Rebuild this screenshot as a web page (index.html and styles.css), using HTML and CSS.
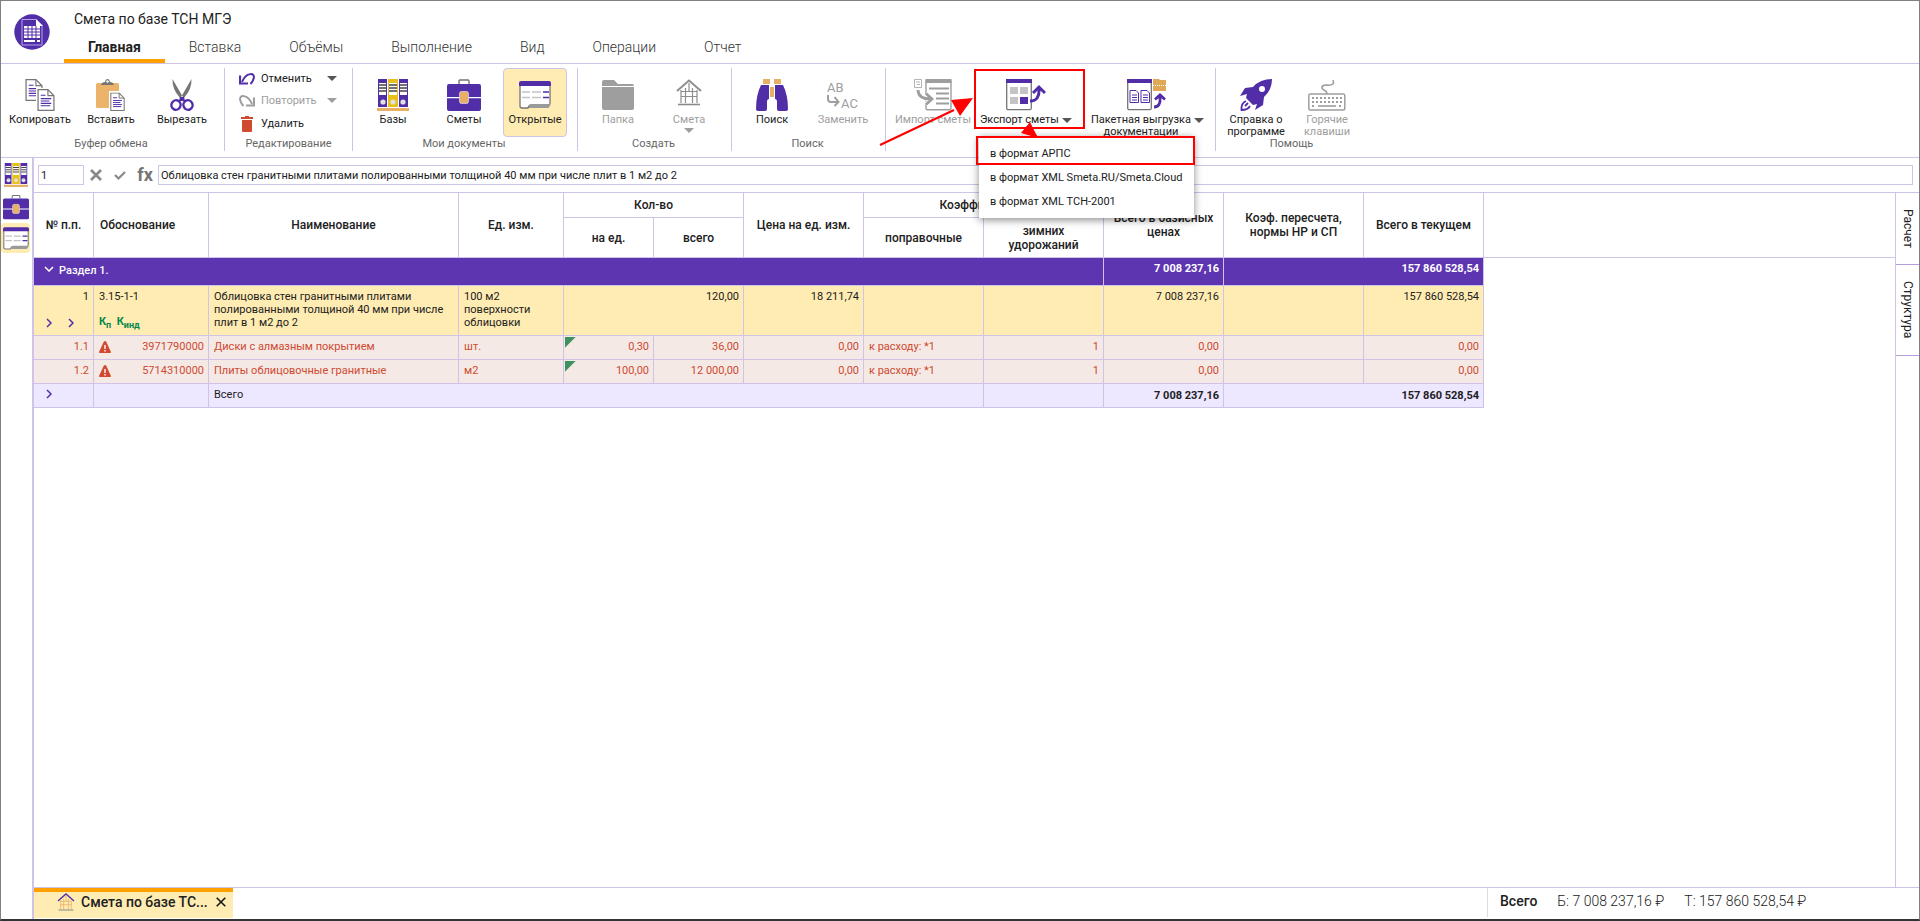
FILE: index.html
```html
<!DOCTYPE html>
<html lang="ru">
<head>
<meta charset="utf-8">
<title>Смета по базе ТСН МГЭ</title>
<link rel="stylesheet" href="styles.css">
</head>
<body>
<svg class="sprite" aria-hidden="true">
  <symbol id="i-books" viewBox="0 0 32 32">
    <path fill="#512da8" d="M1 0h9v28H1zM22 0h9v28h-9z"/><path fill="#e8c01c" d="M11 0h10v28H11z"/>
    <path fill="#fff" d="M2 4h7v12H2zM12 4h8v12h-8zM23 4h7v12h-7z"/>
    <path stroke="#444" stroke-width="1.6" d="M2 6h7M2 9h7M2 12h7M12 6h8M12 9h8M12 12h8M23 6h7M23 9h7M23 12h7"/>
    <circle cx="6" cy="23" r="2.6" fill="#e0e0e0"/><circle cx="16" cy="23" r="2.6" fill="#e0e0e0"/><circle cx="26" cy="23" r="2.6" fill="#e0e0e0"/>
    <path fill="#e8b064" d="M0 29h32v3H0z"/>
  </symbol>
  <symbol id="i-bag" viewBox="0 0 34 32">
    <path d="M12 5V2.2Q12 1 13 1h8q1 0 1 1.200V5" fill="none" stroke="#757575" stroke-width="1.400"/>
    <path fill="#512da8" d="M2 5h30q2 0 2 2v11H0V7q0-2 2-2zM0 19.200h34V30q0 2-2 2H2q-2 0-2-2z"/>
    <rect x="12.500" y="12.500" width="9" height="12" rx="2" fill="#e8b064" stroke="#d8cdf0" stroke-width=".8"/>
  </symbol>
  <symbol id="i-open" viewBox="0 0 32 28">
    <path d="M1 4V25q0 2 2 2h6q1-3 3-3h18q1 0 1-2V4z" fill="#fff" stroke="#757575" stroke-width="1.300"/>
    <path d="M10 27h19q2-.5 2-4H12q-2 .5-2 4z" fill="#9a9a9a"/>
    <path fill="#512da8" d="M2 0h28q2 0 2 2v3H0V2q0-2 2-2z"/>
    <path stroke="#c4c4c4" stroke-width="1.500" d="M3 11h8M13 11h9M3 16.500h8M13 16.500h9"/><path stroke="#512da8" stroke-width="1.500" d="M24 11h6M24 16.500h6"/>
  </symbol>
  <symbol id="i-page" viewBox="0 0 18 23">
    <path d="M.7.700H11l6.300 6.300v15.300H.7z" fill="#fff" stroke="#757575" stroke-width="1.300"/><path d="M11 .7v6.300h6.300" fill="none" stroke="#757575" stroke-width="1.200"/>
    <path d="M3.500 6.500h5M3.500 10h11M3.500 12.500h9M3.500 15h11M3.500 17.500h10" stroke="#512da8" stroke-width="1.200"/>
  </symbol>
  <symbol id="i-copy" viewBox="0 0 30 32"><use href="#i-page" x="0" y="0" width="18" height="22"/><path fill="#fff" d="M11 9h12l7 7v16H11z"/><use href="#i-page" x="12" y="10" width="18" height="22"/></symbol>
  <symbol id="i-paste" viewBox="0 0 30 32">
    <rect y="4" width="23" height="25" rx="1.500" fill="#ebb46a"/><path d="M5 6q1-3 4-3 .5-3 2.500-3T14 3q3 0 4 3z" fill="#757575"/><circle cx="11.500" cy="2.500" r="1.200" fill="#fff"/>
    <path fill="#fff" d="M13 12h10l7 6v14H13z"/><use href="#i-page" x="14" y="13.500" width="15" height="18.500"/>
  </symbol>
  <symbol id="i-cut" viewBox="0 0 24 32">
    <path d="M2.500 0l11 19h-3.500Q2 10 2.500 0zM21.500 0l-11 19H14Q22 10 21.500 0z" fill="#757575"/>
    <path d="M10 18h4l1 4h-6z" fill="#512da8"/><ellipse cx="6" cy="26" rx="4.500" ry="4.800" fill="none" stroke="#512da8" stroke-width="2.400" transform="rotate(25 6 26)"/><ellipse cx="18" cy="26" rx="4.500" ry="4.800" fill="none" stroke="#512da8" stroke-width="2.400" transform="rotate(-25 18 26)"/>
  </symbol>
  <symbol id="i-undo" viewBox="0 0 16 12"><path d="M3 9C7-1 17-1 14.500 6 14 8 13 9.500 11.500 11" fill="none" stroke="currentColor" stroke-width="2"/><path d="M1 2.500V10.500H9" fill="none" stroke="currentColor" stroke-width="2.200"/></symbol>
  <symbol id="i-trash" viewBox="0 0 12 16"><path fill="#cf4a2f" d="M4 0h4v1h4v2H0V1h4zM1 4h10v11q0 1-1 1H2q-1 0-1-1z"/></symbol>
  <symbol id="i-folder" viewBox="0 0 32 32"><path fill="#9e9e9e" d="M2 1h10l4 4h14q2 0 2 2H0V3q0-2 2-2zM0 8h32v21q0 2-2 2H2q-2 0-2-2z"/></symbol>
  <symbol id="i-house" viewBox="0 0 26 27">
    <path d="M1 12L13 1.500 25 12" fill="none" stroke="var(--roof)" stroke-width="2"/>
    <path d="M5 11v13M9.500 9v15M16.500 9v15M21 11v13M5 12.500h16M5 17.500h16M13 4v8" fill="none" stroke="var(--wall)" stroke-width="1.200"/><path d="M2 25.500h22" stroke="#8a8a8a" stroke-width="1.600"/>
  </symbol>
  <symbol id="i-find" viewBox="0 0 32 32">
    <path fill="#e8b064" d="M7 0h7v5H7zM18 0h7v5h-7zM14 8h4v10h-4z"/>
    <path fill="#512da8" d="M5 6h8v14q-2 0-2 3v7q0 2-2 2H2q-2 0-2-2Q0 16 5 6zM27 6h-8v14q2 0 2 3v7q0 2 2 2h7q2 0 2-2 0-14-5-24z"/>
  </symbol>
  <symbol id="i-import" viewBox="0 0 38 32">
    <rect x="12" y=".7" width="25" height="30" rx="1.500" fill="#fff" stroke="#9e9e9e" stroke-width="1.400"/><path fill="#9e9e9e" d="M11.500 0h26v4h-26z"/>
    <path d="M15 9.500h20M22 14.500h13M22 19.500h13M22 24.500h13" stroke="#9e9e9e" stroke-width="1.800"/>
    <path d="M.5.500h7v8h-7zM2 3h4M3 5.500h3" fill="none" stroke="#b5b5b5"/>
    <path d="M4 11q0 9 13 9M12 14.500l6 5.500-6 5.500" fill="none" stroke="#fff" stroke-width="4.500"/><path d="M4 11q0 9 13 9M12 14.500l6 5.500-6 5.500" fill="none" stroke="#9e9e9e" stroke-width="2.800"/>
  </symbol>
  <symbol id="i-export" viewBox="0 0 40 32">
    <rect x=".7" y=".7" width="24.600" height="30" rx="1.500" fill="#fff" stroke="#757575" stroke-width="1.300"/><path fill="#512da8" d="M0 0h26v4H0z"/>
    <path fill="#c4c4c4" d="M4 8h8v7H4zM14 8h8v7h-8zM4 18h8v7H4z"/><path fill="#512da8" d="M14 18h8v7h-8z"/>
    <path d="M24 22q10 0 9-13M27 14l6-6 6 6" fill="none" stroke="#512da8" stroke-width="3"/>
  </symbol>
  <symbol id="i-batch" viewBox="0 0 40 32">
    <rect x=".7" y=".7" width="23.600" height="30" rx="1.500" fill="#fff" stroke="#757575" stroke-width="1.300"/><path fill="#512da8" d="M0 0h25v4H0z"/>
    <path d="M3 11.500h6l2.500 2.500v9.500H3zM14 11.500h6l2.500 2.500v9.500H14z" fill="#fff" stroke="#512da8" stroke-width="1"/><path d="M5 16h5M5 18.500h5M5 21h5M16 16h5M16 18.500h5M16 21h5" stroke="#512da8"/>
    <path fill="#e0a955" d="M26 0h6l1 1h6v11H26z"/><path d="M26 6.500h13" stroke="#fff" stroke-dasharray="1 1"/>
    <path d="M27 28q7 0 6-10M28 20.500l5-4.500 5 4.500" fill="none" stroke="#512da8" stroke-width="2.800"/>
  </symbol>
  <symbol id="i-rocket" viewBox="0 0 32 32">
    <path fill="#512da8" fill-rule="evenodd" d="M32 0Q20 0 13 8L5 9 0 17l7-2-1 4 7 7 4-1-2 6 8-5 1-8Q32 11 32 0zM22 7a3 3 0 1 1 0 6 3 3 0 0 1 0-6z"/><path d="M6 22q-5 2-4.500 9Q8 31 10 27M5 27l3-3" fill="none" stroke="#512da8" stroke-width="1.800"/>
  </symbol>
  <symbol id="i-keys" viewBox="0 0 38 32">
    <path d="M19 15c0-5-6-3-5-7s8 0 11-3q1-1 0-4" fill="none" stroke="#9e9e9e" stroke-width="1.600"/><rect x=".8" y="15" width="36" height="16" rx="1.500" fill="#fff" stroke="#9e9e9e" stroke-width="1.500"/>
    <path d="M4 19h30M4 23h30M4 27h3M31 27h3" stroke="#9e9e9e" stroke-width="1.800" stroke-dasharray="2 2"/><path d="M10 27h18" stroke="#9e9e9e" stroke-width="1.600"/>
  </symbol>
  <symbol id="i-warn" viewBox="0 0 12 12"><path d="M6 0q.8 0 1.200.800L12 11q0 1-1 1H1q-1 0-1-1L4.800.800Q5.200 0 6 0z" fill="#cf4a2f"/><path d="M6 4v4M6 9v1.500" stroke="#fff" stroke-width="1.400"/></symbol>
  <symbol id="i-chev" viewBox="0 0 6 10"><path d="M1 1l4 4-4 4" fill="none" stroke="currentColor" stroke-width="1.500"/></symbol>
</svg>

<div class="app">
  <header class="header">
    <svg class="logo" viewBox="0 0 36 36"><circle cx="18" cy="18" r="17.700" fill="#512da8"/><path d="M8 5.500h14l6 6V31H8z" fill="none" stroke="#b9a5e6"/><path d="M22 5l7 7h-7z" fill="#fff"/><path fill="#fff" d="M10 12h16v12H10zM10 26h11v2H10zM23 26h3v2h-3z"/><path d="M10 15h16M10 18h16M10 21h16M14 12v12M18 12v12M22 12v12" stroke="#512da8"/></svg>
    <div class="heading">
      <h1 class="title">Смета по базе ТСН МГЭ</h1>
      <nav class="tabs">
        <button class="tab tab-active">Главная</button><button class="tab">Вставка</button><button class="tab">Объёмы</button><button class="tab">Выполнение</button><button class="tab">Вид</button><button class="tab">Операции</button><button class="tab">Отчет</button>
      </nav>
    </div>
  </header>

  <div class="ribbon">
    <section class="group group-first">
      <div class="tools">
        <button class="tool"><svg class="w30"><use href="#i-copy"/></svg><span>Копировать</span></button>
        <button class="tool"><svg class="w30"><use href="#i-paste"/></svg><span>Вставить</span></button>
        <button class="tool"><svg class="w24"><use href="#i-cut"/></svg><span>Вырезать</span></button>
      </div>
      <div class="caption">Буфер обмена</div>
    </section>
    <section class="group group-edit">
      <div class="edits">
        <button class="edit"><svg class="undo"><use href="#i-undo"/></svg><span class="edit-label">Отменить</span><i class="caret"></i></button>
        <button class="edit" disabled><svg class="undo flip"><use href="#i-undo"/></svg><span class="edit-label">Повторить</span><i class="caret"></i></button>
        <button class="edit"><svg class="trash"><use href="#i-trash"/></svg><span class="edit-label">Удалить</span></button>
      </div>
      <div class="caption">Редактирование</div>
    </section>
    <section class="group">
      <div class="tools">
        <button class="tool"><svg class="w32"><use href="#i-books"/></svg><span>Базы</span></button>
        <button class="tool"><svg class="w34"><use href="#i-bag"/></svg><span>Сметы</span></button>
        <button class="tool tool-active"><svg class="w32"><use href="#i-open"/></svg><span>Открытые</span></button>
      </div>
      <div class="caption">Мои документы</div>
    </section>
    <section class="group">
      <div class="tools">
        <button class="tool" disabled><svg class="w32"><use href="#i-folder"/></svg><span>Папка</span></button>
        <button class="tool" disabled><svg class="w26 house-gray"><use href="#i-house" height="27"/></svg><span>Смета</span><i class="caret"></i></button>
      </div>
      <div class="caption">Создать</div>
    </section>
    <section class="group">
      <div class="tools">
        <button class="tool"><svg class="w32"><use href="#i-find"/></svg><span>Поиск</span></button>
        <button class="tool" disabled><svg class="w34" viewBox="0 0 34 32"><text x="1" y="13" class="swap-text">AB</text><text x="15" y="29" class="swap-text">AC</text><path d="M2 16v4q0 3 3 3h7M8.500 18l4 5-4 4" fill="none" stroke="#9e9e9e" stroke-width="2"/></svg><span>Заменить</span></button>
      </div>
      <div class="caption">Поиск</div>
    </section>
    <section class="group">
      <div class="tools">
        <button class="tool tool-wide" disabled><svg class="w38"><use href="#i-import"/></svg><span>Импорт сметы</span></button>
        <div class="export">
          <button class="tool tool-wide" aria-expanded="true"><svg class="w40"><use href="#i-export"/></svg><span class="with-caret">Экспорт сметы<i class="caret"></i></span></button>
          <ul class="menu">
            <li><button class="menu-item">в формат АРПС</button></li>
            <li><button class="menu-item">в формат XML Smeta.RU/Smeta.Cloud</button></li>
            <li><button class="menu-item">в формат XML ТСН-2001</button></li>
          </ul>
          <div class="mark mark-button"></div>
          <div class="mark mark-item"></div>
          <svg class="arrows" viewBox="0 0 170 70"><path d="M1 62L75 27" stroke="red" stroke-width="2"/><path fill="red" d="M94 15L72 17l9 16zM151 39l8 16-17-5zM151 44l9 11-18-5z"/></svg>
        </div>
        <button class="tool tool-wide tool-batch"><svg class="w40"><use href="#i-batch"/></svg><span class="with-caret">Пакетная выгрузка<i class="caret"></i></span><span class="second">документации</span></button>
      </div>
    </section>
    <section class="group group-last">
      <div class="tools">
        <button class="tool"><svg class="w32"><use href="#i-rocket"/></svg><span>Справка о программе</span></button>
        <button class="tool" disabled><svg class="w38"><use href="#i-keys"/></svg><span>Горячие клавиши</span></button>
      </div>
      <div class="caption">Помощь</div>
    </section>
  </div>

  <div class="body">
    <aside class="rail">
      <button class="rail-item" aria-label="Базы"><svg class="w24"><use href="#i-books"/></svg></button>
      <button class="rail-item" aria-label="Сметы"><svg class="w26"><use href="#i-bag"/></svg></button>
      <button class="rail-item rail-active" aria-label="Открытые"><svg class="w26"><use href="#i-open"/></svg></button>
    </aside>
    <main class="main">
      <div class="formula">
        <input class="cell-no" value="1" aria-label="Номер">
        <button class="mini" aria-label="Отмена"><svg viewBox="0 0 12 12"><path d="M1 1l10 10M11 1L1 11" stroke="#8a8a8a" stroke-width="2.800"/></svg></button>
        <button class="mini" aria-label="Принять"><svg viewBox="0 0 12 12"><path d="M1 6l3.500 3.500L11 3" fill="none" stroke="#8a8a8a" stroke-width="2.200"/></svg></button>
        <button class="mini fx">fx</button>
        <input class="cell-text" value="Облицовка стен гранитными плитами полированными толщиной 40 мм при числе плит в 1 м2 до 2" aria-label="Содержимое ячейки">
      </div>
      <div class="work">
        <div class="sheet">
          <div class="sheet-head-line"></div>
          <table class="grid">
            <colgroup><col class="c60"><col class="c115"><col class="c250"><col class="c105"><col class="c90"><col class="c90"><col class="c120"><col class="c120"><col class="c120"><col class="c120"><col class="c140"><col class="c120"></colgroup>
            <thead>
              <tr class="h1"><th rowspan="2">№ п.п.</th><th rowspan="2" class="left">Обоснование</th><th rowspan="2">Наименование</th><th rowspan="2">Ед. изм.</th><th colspan="2">Кол-во</th><th rowspan="2">Цена на ед. изм.</th><th colspan="2">Коэффициенты</th><th rowspan="2">Всего в базисных ценах</th><th rowspan="2">Коэф. пересчета, нормы НР и СП</th><th rowspan="2">Всего в текущем</th></tr>
              <tr class="h2"><th>на ед.</th><th>всего</th><th>поправочные</th><th>зимних удорожаний</th></tr>
            </thead>
            <tbody>
              <tr class="section"><td colspan="9"><button class="chev down" aria-label="Свернуть"><svg><use href="#i-chev"/></svg></button>Раздел 1.</td><td class="num">7 008 237,16</td><td class="num" colspan="2">157 860 528,54</td></tr>
              <tr class="item"><td class="num">1<div class="chevs"><button class="chev" aria-label="Развернуть"><svg><use href="#i-chev"/></svg></button><button class="chev" aria-label="Ресурсы"><svg><use href="#i-chev"/></svg></button></div></td><td>3.15-1-1<div class="koef">К<sub>п</sub>&nbsp; К<sub>инд</sub></div></td><td>Облицовка стен гранитными плитами полированными толщиной 40 мм при числе плит в 1 м2 до 2</td><td>100 м2 поверхности облицовки</td><td class="num" colspan="2">120,00</td><td class="num">18 211,74</td><td></td><td></td><td class="num">7 008 237,16</td><td></td><td class="num">157 860 528,54</td></tr>
              <tr class="res"><td class="num">1.1</td><td><div class="code"><svg><use href="#i-warn"/></svg>3971790000</div></td><td>Диски с алмазным покрытием</td><td>шт.</td><td class="num flag">0,30</td><td class="num">36,00</td><td class="num">0,00</td><td>к расходу: *1</td><td class="num">1</td><td class="num">0,00</td><td></td><td class="num">0,00</td></tr>
              <tr class="res"><td class="num">1.2</td><td><div class="code"><svg><use href="#i-warn"/></svg>5714310000</div></td><td>Плиты облицовочные гранитные</td><td>м2</td><td class="num flag">100,00</td><td class="num">12 000,00</td><td class="num">0,00</td><td>к расходу: *1</td><td class="num">1</td><td class="num">0,00</td><td></td><td class="num">0,00</td></tr>
              <tr class="total"><td><button class="chev" aria-label="Развернуть"><svg><use href="#i-chev"/></svg></button></td><td></td><td colspan="6">Всего</td><td></td><td class="num">7 008 237,16</td><td class="num" colspan="2">157 860 528,54</td></tr>
            </tbody>
          </table>
        </div>
        <div class="side-tabs"><button class="side-tab side-a">Расчет</button><button class="side-tab side-b">Структура</button></div>
      </div>
      <footer class="footer">
        <div class="doc"><svg class="doc-icon"><use href="#i-house"/></svg><span class="doc-name">Смета по базе ТС...</span><button class="close" aria-label="Закрыть"><svg viewBox="0 0 10 10"><path d="M.7.700l8.600 8.600M9.300.700L.7 9.300" stroke="#111" stroke-width="1.500"/></svg></button></div>
        <div class="sums"><strong>Всего</strong><span>Б: 7 008 237,16 ₽</span><span>Т: 157 860 528,54 ₽</span></div>
      </footer>
    </main>
  </div>
</div>
</body>
</html>
```
FILE: styles.css
```css
* { box-sizing: border-box; }
body { margin: 0; font-family: Roboto, "Liberation Sans", sans-serif; font-size: 11px; color: #212121; background: #fff; }
button, input { font: inherit; color: inherit; background: none; border: 0; padding: 0; margin: 0; }
.sprite { position: absolute; width: 0; height: 0; }
.app { --line: #cfc4e8; --violet: #512da8; min-height: 100vh; display: flex; flex-direction: column; border: 1px solid #808080; border-bottom: 2px solid #333; }

.header { display: flex; gap: 14px; padding: 0 0 0 13px; border-bottom: 1px solid var(--line); }
.logo { width: 36px; height: 36px; margin-top: 13px; flex: none; }
.heading { display: flex; flex-direction: column; }
.title { margin: 8px 0 0 10px; font-size: 14px; line-height: 20px; font-weight: 400; }
.tabs { display: flex; margin-top: 5px; }
.tab { height: 29px; padding: 0 24px; font-size: 14px; line-height: 20px; border-bottom: 4px solid transparent; color: #333; font-weight: 300; }
.tab-active { font-weight: 700; color: #212121; border-color: #ffa000; }

.ribbon { display: flex; height: 94px; padding: 4px 0 6px; border-bottom: 1px solid var(--line); }
.group { display: flex; flex-direction: column; padding: 0 10px 0 8px; border-right: 1px solid var(--line); }
.group-first { padding-left: 7px; }
.group-last { border-right: 0; }
.tools { display: flex; gap: 7px; height: 71px; }
.caption { line-height: 14px; text-align: center; color: #666; }
.tool { width: 64px; height: 69px; padding-top: 10px; display: flex; flex-direction: column; align-items: center; line-height: 12px; border: 1px solid transparent; border-radius: 4px; white-space: nowrap; }
.tool > svg { height: 32px; margin-bottom: 3px; flex: none; }
.group-last .tool { white-space: normal; }
.tool-active { background: #ffecb3; border-color: var(--line); }
.tool-wide { width: auto; }
.tool-batch { margin-left: 10px; }
.tool:disabled, .edit:disabled { color: #9e9e9e; }
.w24 { width: 24px; } .w26 { width: 26px; } .w30 { width: 30px; } .w32 { width: 32px; } .w34 { width: 34px; } .w38 { width: 38px; } .w40 { width: 40px; }
.caret { display: block; border: 5px solid transparent; border-top-color: #555; border-bottom: 0; }
.tool:disabled .caret, .edit:disabled .caret { border-top-color: #9e9e9e; }
.tool > .caret { margin-top: 2px; }
.with-caret { display: flex; align-items: center; gap: 3px; }
.second { padding-right: 13px; }
.house-gray { --roof: #8e8e8e; --wall: #8e8e8e; }
.swap-text { font: 400 13px Roboto, sans-serif; fill: #9e9e9e; }

.group-edit { width: 128px; padding: 0 10px; }
.edits { height: 71px; display: flex; flex-direction: column; padding: 0 0 0 4px; }
.edit { height: 23px; display: flex; align-items: center; }
.edit:first-child { height: 21px; }
.undo { width: 16px; height: 12px; color: var(--violet); }
.edit:disabled .undo { color: #9e9e9e; }
.flip { transform: scaleX(-1); }
.trash { width: 12px; height: 16px; margin: 0 2px; }
.edit-label { flex: 1; margin-left: 6px; text-align: left; }
.edit .caret { margin-right: 5px; }

.export { position: relative; }
.menu { position: absolute; z-index: 2; left: 0; top: 68px; width: 215px; margin: 0; padding: 5px 0; list-style: none; background: #fff; box-shadow: 0 2px 8px rgba(0, 0, 0, .45); }
.menu-item { display: block; width: 100%; height: 24px; padding-left: 11px; text-align: left; white-space: nowrap; }
.mark { position: absolute; z-index: 3; border: 2px solid red; }
.mark-button { left: -5px; top: 1px; width: 111px; height: 60px; }
.mark-item { left: -3px; top: 68px; width: 219px; height: 29px; }
.arrows { position: absolute; z-index: 4; left: -100px; top: 15px; width: 170px; height: 70px; pointer-events: none; }

.body { flex: 1; display: flex; }
.rail { width: 33px; border-right: 2px solid var(--line); padding-top: 1px; flex: none; }
.rail-item { display: flex; width: 29px; height: 32px; align-items: center; justify-content: center; }
.rail-item svg { height: 26px; }
.rail-active { height: 30px; background: #ffecb3; border-radius: 4px; }
.rail-active svg { height: 23px; }
.main { flex: 1; min-width: 0; display: flex; flex-direction: column; }
.formula { display: flex; align-items: center; padding: 7px 6px 7px 0; border-bottom: 1px solid var(--line); }
.formula input { height: 20px; border: 1px solid var(--line); padding: 0 2px; }
.cell-no { width: 46px; margin: 0 6px 0 4px; }
.cell-text { flex: 1; }
.mini { width: 12px; height: 12px; margin-right: 12px; }
.mini svg { display: block; width: 12px; height: 12px; }
.fx { width: 20px; height: 20px; margin: 0 3px 0 -3px; font-size: 18px; line-height: 20px; font-weight: 700; color: #757575; }

.work { flex: 1; display: flex; }
.sheet { flex: 1; min-width: 0; position: relative; }
.sheet-head-line { position: absolute; left: 0; right: 0; top: 64px; height: 1px; background: var(--line); }
.grid { position: relative; table-layout: fixed; width: 1450px; border-spacing: 0; line-height: 13px; background: #fff; }
.c60 { width: 60px; } .c90 { width: 90px; } .c105 { width: 105px; } .c115 { width: 115px; } .c120 { width: 120px; } .c140 { width: 140px; } .c250 { width: 250px; }
.grid th, .grid td { border: 0 solid var(--line); border-width: 0 1px 1px 0; }
.grid th { padding: 0 6px; font-size: 12px; font-weight: 500; line-height: 14px; text-align: center; }
.grid th.left { text-align: left; }
.h1 { height: 25px; } .h2 { height: 40px; }
.grid td { padding: 4px 4px 0 5px; vertical-align: top; }
.grid td.num { text-align: right; }
.section { height: 28px; background: #5e35b1; color: #fff; font-weight: 500; }
.section .num, .total .num { font-weight: 700; }
.item { height: 50px; background: #ffecb3; }
.res { height: 24px; background: #f5e9e6; color: #cf4a2f; }
.total { height: 24px; background: #ede7ff; }
.chev { width: 12px; height: 10px; color: var(--violet); }
.chev svg { display: block; width: 6px; height: 10px; margin: auto; }
.grid .section td:first-child { padding: 6px 0 0 9px; }
.grid .total .num { padding-top: 5px; }
.down { color: #fff; margin-right: 4px; }
.down svg { transform: rotate(90deg); }
.chevs { display: flex; gap: 10px; margin-top: 15px; padding-left: 4px; }
.grid .total td:first-child { padding: 5px 0 0 9px; }
.koef { margin-top: 11px; font-weight: 700; color: #00874a; line-height: 16px; }
.koef sub { font-size: 9px; line-height: 9px; }
.code { display: flex; justify-content: space-between; align-items: center; }
.code svg { width: 12px; height: 12px; }
.flag { background: linear-gradient(135deg, #3e9160 7px, transparent 8px) 1px 1px no-repeat; }

.side-tabs { width: 24px; border-left: 1px solid var(--line); display: flex; flex-direction: column; }
.side-tab { width: 23px; writing-mode: vertical-rl; text-align: center; font-size: 12px; line-height: 23px; border-bottom: 1px solid #b39ddb; }
.side-a { height: 72px; } .side-b { height: 91px; }

.footer { display: flex; justify-content: space-between; height: 32px; border-top: 1px solid var(--line); }
.doc { display: flex; align-items: center; width: 199px; height: 30px; padding: 0 7px 6px 23px; background: #ffecb3; border-top: 4px solid #ffa000; font-size: 14px; font-weight: 500; }
.doc-icon { --roof: #512da8; --wall: #e8b064; width: 18px; height: 18px; margin-right: 6px; }
.doc-name { flex: 1; }
.close { width: 10px; height: 10px; }
.close svg { display: block; }
.sums { display: flex; gap: 20px; width: 432px; margin-bottom: 2px; padding: 3px 0 0 12px; border-left: 1px solid #ddd; font-size: 14px; line-height: 20px; }
.sums strong { font-weight: 500; }
.sums span { font-weight: 300; }
```
